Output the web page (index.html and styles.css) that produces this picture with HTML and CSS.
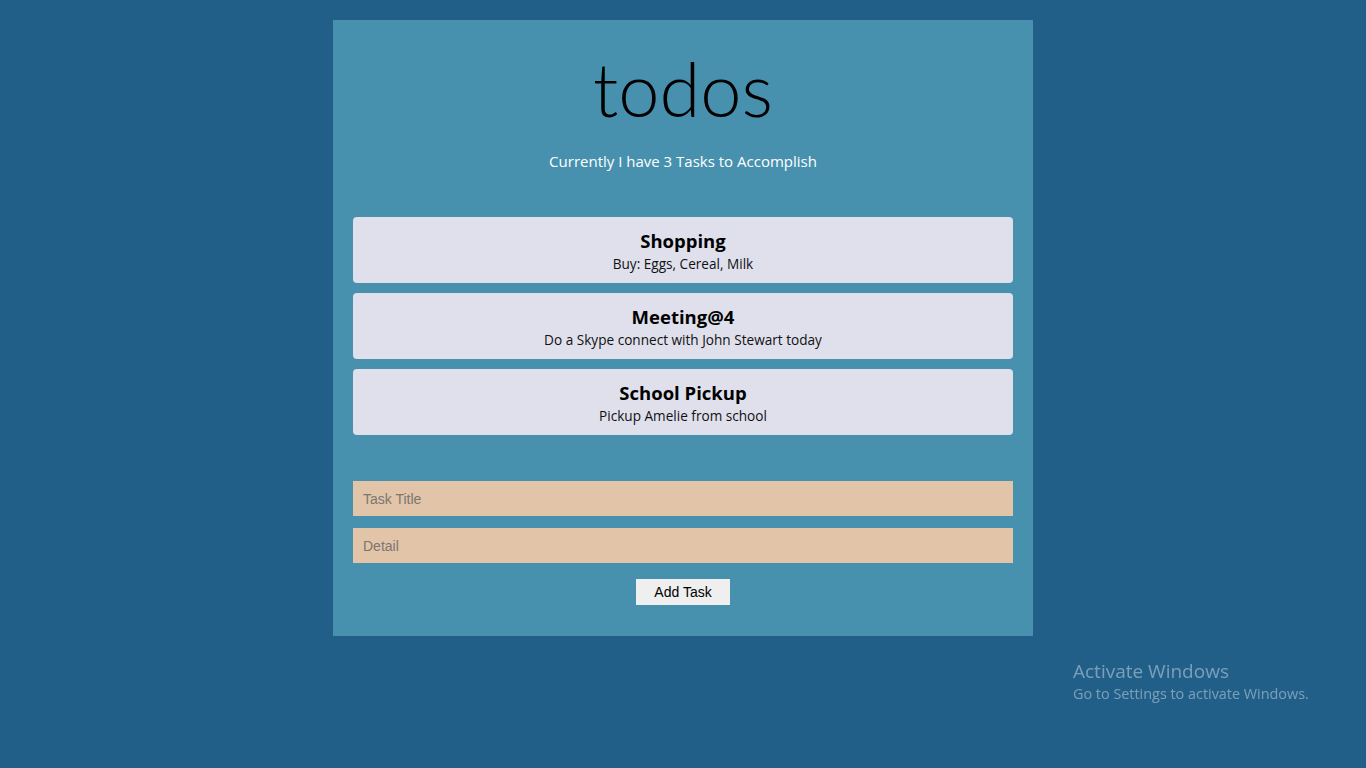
FILE: index.html
```html
<!DOCTYPE html>
<html>
<head>
<meta charset="utf-8">
<link rel="stylesheet" href="styles.css">
</head>
<body>
<div class="app">
  <h1 class="logo">todos</h1>
  <p class="count">Currently I have 3 Tasks to Accomplish</p>
  <div class="list">
    <div class="card"><div class="card-title">Shopping</div><div class="card-detail">Buy: Eggs, Cereal, Milk</div></div>
    <div class="card"><div class="card-title">Meeting@4</div><div class="card-detail">Do a Skype connect with John Stewart today</div></div>
    <div class="card"><div class="card-title">School Pickup</div><div class="card-detail">Pickup Amelie from school</div></div>
  </div>
  <form class="form">
    <input class="field" type="text" placeholder="Task Title">
    <input class="field" type="text" placeholder="Detail">
    <button class="btn" type="button">Add Task</button>
  </form>
</div>
<div class="watermark">
  <div class="wm-title">Activate Windows</div>
  <div class="wm-sub">Go to Settings to activate Windows.</div>
</div>
</body>
</html>
```

FILE: styles.css
```css
html, body {
  margin: 0;
  padding: 0;
  background: #215f89;
  height: 100%;
}
body {
  font-family: "Open Sans", "Noto Sans", sans-serif;
}
.app {
  width: 700px;
  margin: 20px auto 0;
  background: #4791af;
  padding: 20px 20px 31px;
  box-sizing: border-box;
}
.logo {
  margin: 9px 0 0;
  text-align: center;
  font-family: "Lato", sans-serif;
  font-weight: 300;
  font-size: 74px;
  line-height: 80px;
  color: #000;
}
.count {
  margin: 22px 0 0;
  text-align: center;
  color: #fff;
  font-size: 15px;
  line-height: 20px;
}
.list {
  margin-top: 46px;
  display: flex;
  flex-direction: column;
  gap: 10px;
}
.card {
  background: #dfe0ec;
  border-radius: 4px;
  height: 66px;
  box-sizing: border-box;
  padding-top: 12px;
  display: flex;
  flex-direction: column;
  align-items: center;
}
.card-title {
  font-weight: 700;
  font-size: 18.5px;
  line-height: 24px;
  color: #000;
}
.card-detail {
  margin-top: 2px;
  font-size: 13.6px;
  line-height: 18px;
  color: #111;
}
.form {
  margin-top: 46px;
  display: flex;
  flex-direction: column;
  gap: 12px;
  align-items: center;
}
.field {
  width: 100%;
  height: 35px;
  box-sizing: border-box;
  border: none;
  background: #e2c4a8;
  padding: 0 10px;
  font-family: "Liberation Sans", Arial, sans-serif;
  font-size: 14px;
  outline: none;
}
.field::placeholder {
  color: #7a7670;
}
.btn {
  margin-top: 4px;
  width: 94px;
  height: 26px;
  border: none;
  background: #efefef;
  font-family: "Liberation Sans", Arial, sans-serif;
  font-size: 14px;
  color: #000;
}
.watermark {
  position: fixed;
  left: 1073px;
  top: 658px;
  color: rgba(255, 255, 255, 0.4);
  font-family: "Open Sans", "Noto Sans", sans-serif;
}
.wm-title {
  font-size: 19px;
  line-height: 26px;
}
.wm-sub {
  font-size: 14.4px;
  line-height: 19px;
}
```
